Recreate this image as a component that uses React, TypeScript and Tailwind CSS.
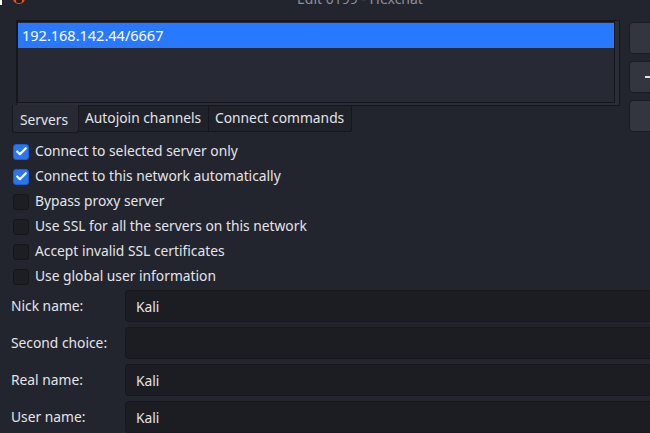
import { Check } from 'lucide-react';

const options = [
  { label: 'Connect to selected server only', checked: true },
  { label: 'Connect to this network automatically', checked: true },
  { label: 'Bypass proxy server', checked: false },
  { label: 'Use SSL for all the servers on this network', checked: false },
  { label: 'Accept invalid SSL certificates', checked: false },
  { label: 'Use global user information', checked: false },
];

const fields = [
  { label: 'Nick name:', value: 'Kali' },
  { label: 'Second choice:', value: '' },
  { label: 'Real name:', value: 'Kali' },
  { label: 'User name:', value: 'Kali' },
];

export default function App() {
  return (
    <div
      className="w-[650px] h-[433px] overflow-hidden bg-[#23252e] text-[#e3e4e8] text-[13.8px]"
      style={{ fontFamily: '"Noto Sans", "Open Sans", sans-serif' }}
    >
      <div className="relative h-[20px] overflow-hidden">
        <div className="absolute left-0 top-0 w-[2px] h-[5px] bg-white" />
        <div className="absolute left-[13px] -top-[8px] w-[12px] h-[12px] rounded-full bg-[#e4551c] flex items-center justify-center">
          <div className="w-[6px] h-[4px] mt-[5px] rounded-sm bg-[#2a1a14]" />
        </div>
        <div className="absolute left-[297px] -top-[12px] text-[14px] text-[#8d9099] whitespace-nowrap">
          Edit 0199 - Hexchat
        </div>
      </div>

      {/* server list + buttons */}
      <div className="flex">
        <div className="shrink-0 ml-[16px] w-[604px] h-[86px] border border-[#15171c] bg-[#2a2c37] pr-[4px] pb-[2px]">
          <div className="h-full border border-[#15171c] bg-[#272a34] pt-[1px]">
            <div className="h-[25px] bg-[#2979ff] text-white pl-[4px] leading-[25px] text-[14.5px]">
              192.168.142.44/6667
            </div>
          </div>
        </div>
        <div className="shrink-0 ml-[9px] mt-[2px] flex flex-col gap-[7px]">
          <div className="w-[40px] h-[32px] rounded-[4px] border border-[#1a1c21] bg-[#33353f]" />
          <div className="w-[40px] h-[32px] rounded-[4px] border border-[#1a1c21] bg-[#33353f] flex items-center">
            <div className="ml-[15px] w-[8px] h-[1.5px] bg-[#e3e4e8]" />
          </div>
          <div className="w-[40px] h-[32px] rounded-[4px] border border-[#1a1c21] bg-[#33353f]" />
        </div>
      </div>

      {/* tabs */}
      <div className="flex items-start ml-[12px] -mt-[27px]">
        <div className="w-[67px] h-[28px] border border-[#15171c] border-t-0 rounded-b-[3px] bg-[#272a33] pl-[7px] pt-[5px] text-[#e3e4e8]">
          Servers
        </div>
        <div className="w-[130px] h-[27px] border border-[#15171c] border-l-0 bg-[#20222a] pl-[6px] pt-[2px]">
          Autojoin channels
        </div>
        <div className="w-[143px] h-[27px] border border-[#15171c] border-l-0 rounded-br-[3px] bg-[#20222a] pl-[6px] pt-[2px]">
          Connect commands
        </div>
      </div>

      {/* options */}
      <div className="mt-[6px] pl-[13px] flex flex-col">
        {options.map((o) => (
          <div key={o.label} className="h-[25px] flex items-center gap-[6px]">
            {o.checked ? (
              <div className="w-[16px] h-[16px] rounded-[3px] bg-[#2a76f0] border border-[#1f5fcc] flex items-center justify-center">
                <Check className="w-[13px] h-[13px] text-white" strokeWidth={4} />
              </div>
            ) : (
              <div className="w-[16px] h-[16px] rounded-[3px] bg-[#1c1e23] border border-[#14161a]" />
            )}
            <span>{o.label}</span>
          </div>
        ))}
      </div>

      {/* user fields */}
      <div className="mt-[1px] flex flex-col gap-[5px]">
        {fields.map((f) => (
          <div key={f.label} className="flex items-center h-[32px]">
            <div className="w-[125px] pl-[11px] pt-[1px]">{f.label}</div>
            <div className="flex-1 h-[32px] rounded-l-[4px] border border-[#16181d] border-r-0 bg-[#1b1d22] pl-[10px] leading-[31px]">
              {f.value}
            </div>
          </div>
        ))}
      </div>
    </div>
  );
}
